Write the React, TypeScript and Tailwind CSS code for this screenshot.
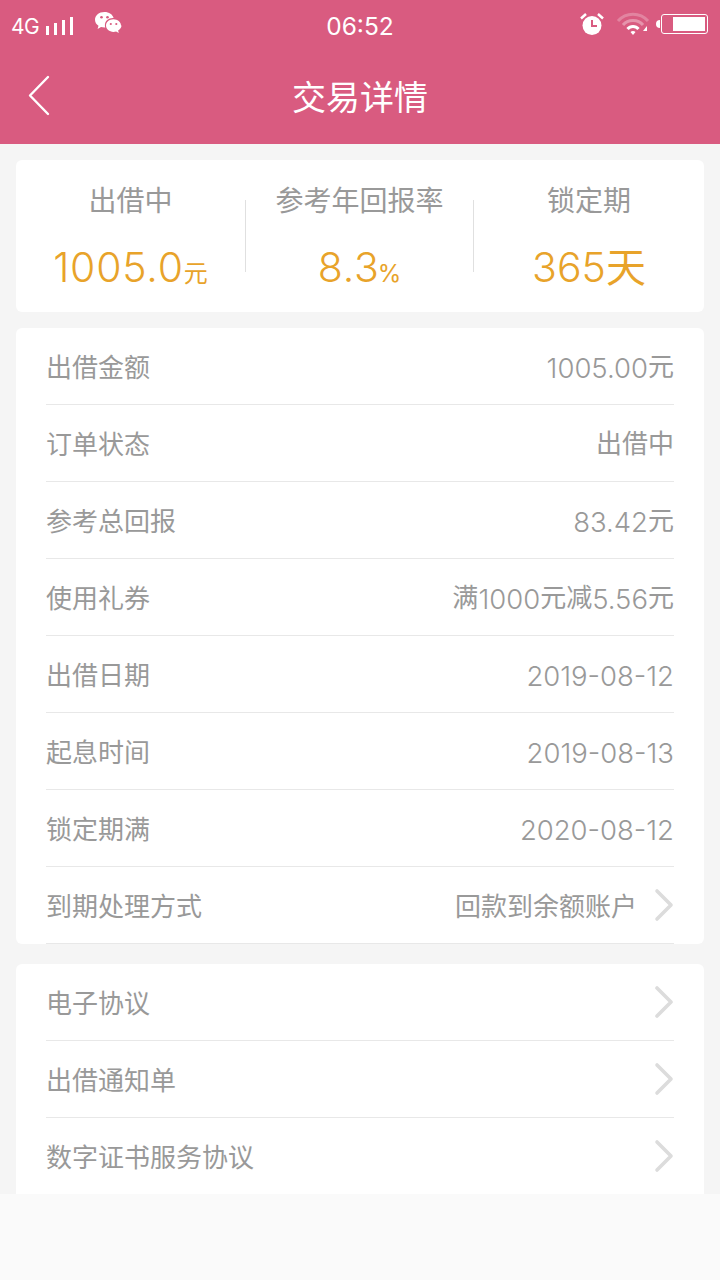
const font = { fontFamily: '"Inter", "Noto Sans CJK SC", sans-serif' };

const detailRows = [
  { label: '出借金额', value: '1005.00元' },
  { label: '订单状态', value: '出借中' },
  { label: '参考总回报', value: '83.42元' },
  { label: '使用礼券', value: '满1000元减5.56元' },
  { label: '出借日期', value: '2019-08-12' },
  { label: '起息时间', value: '2019-08-13' },
  { label: '锁定期满', value: '2020-08-12' },
];

const linkRows = ['电子协议', '出借通知单', '数字证书服务协议'];

function Chevron() {
  return (
    <svg width="20" height="34" viewBox="0 0 20 34" fill="none" className="shrink-0 -mt-[2px]">
      <path d="M3 3 L17 17 L3 31" stroke="#dcdcdc" strokeWidth="3.6" strokeLinecap="round" strokeLinejoin="round" />
    </svg>
  );
}

// digits sit a touch larger than the CJK text around them
function Value({ text }: { text: string }) {
  return (
    <span className="text-[26px] leading-[36px] text-[#999] whitespace-nowrap">
      {text.split(/([0-9.\-]+)/).map((part, i) =>
        i % 2 === 1 ? (
          <span key={i} className="text-[27.5px] leading-none font-light align-[-2px]">{part}</span>
        ) : (
          part
        ),
      )}
    </span>
  );
}

function StatusBar() {
  return (
    <div className="h-12 flex items-center justify-between text-white relative">
      <div className="flex items-center pl-[11px] pt-[5px]">
        <span className="text-[21px] font-normal leading-none tracking-[-0.5px]">4G</span>
        <svg width="30" height="20" viewBox="0 0 30 20" className="ml-[6px]" fill="#fff">
          <rect x="1" y="9" width="3" height="9" />
          <rect x="9" y="6" width="3" height="12" />
          <rect x="17" y="3" width="3" height="15" />
          <rect x="25" y="0" width="3" height="18" />
        </svg>
        <svg width="28" height="26" viewBox="0 0 28 26" className="ml-[19px] -mt-[5px]" fill="#fff">
          <path d="M10.500 1C4.900 1 1 4.500 1 8.800c0 2.500 1.300 4.500 3.500 6L3.600 17.900l3.400-1.800c1.100.3 2.300.5 3.500.5h.8c-.3-.8-.4-1.600-.4-2.400 0-4 3.500-7.100 8-7.100h.7C18.800 3.500 15 1 10.500 1z" />
          <path d="M27 14.600c0-3.500-3.500-6.300-7.500-6.300-4.200 0-7.500 2.800-7.500 6.300s3.300 6.300 7.500 6.300c.9 0 1.800-.1 2.600-.4l2.700 1.500-.7-2.500c2-1.200 3.400-2.800 3.400-4.900z" />
          <circle cx="7.500" cy="6.200" r="1.300" fill="#d95b80" />
          <circle cx="13.500" cy="6.200" r="1.300" fill="#d95b80" />
          <circle cx="16.800" cy="13" r="1.100" fill="#d95b80" />
          <circle cx="22.300" cy="13" r="1.100" fill="#d95b80" />
        </svg>
      </div>
      <span className="absolute left-0 right-0 top-[14px] text-center text-[24.5px] leading-[25px] font-normal">06:52</span>
      <div className="flex items-center pr-3">
        <svg width="26" height="26" viewBox="0 0 26 26" fill="none">
          <circle cx="13" cy="14.500" r="9.500" fill="#fff" />
          <path d="M13 9v6h5" stroke="#d95b80" strokeWidth="2" />
          <path d="M2 7.500 L7 3 M24 7.500 L19 3" stroke="#fff" strokeWidth="2.500" />
        </svg>
        <svg width="34" height="26" viewBox="0 0 34 26" className="ml-[11px]" fill="none">
          <path d="M2 10 C10 1 24 1 32 10" stroke="#fff" strokeOpacity="0.25" strokeWidth="3" />
          <path d="M7 14 C12 8 22 8 27 14" stroke="#fff" strokeOpacity="0.35" strokeWidth="3" />
          <path d="M11.500 18 C14.500 14.500 19.500 14.500 22.500 18" stroke="#fff" strokeWidth="3" />
          <path d="M14.500 21 C16 19.500 18 19.500 19.500 21 L17 24z" fill="#fff" />
          <path d="M27 20 L31 20 L31 15z" fill="#fff" />
        </svg>
        <div className="ml-[6px] w-1 h-2 rounded-l-sm bg-white" />
        <div className="ml-px w-[47px] h-[20px] border border-white rounded-[3px] p-[2px] flex justify-end">
          <div className="w-[32px] h-full bg-white" />
        </div>
      </div>
    </div>
  );
}

function Stat({ label, value, valueClass, unit, unitClass }: { label: string; value: string; valueClass: string; unit: string; unitClass: string }) {
  return (
    <div className="flex flex-col items-center">
      <div className="text-[28px] leading-[40px] text-[#999] font-normal">{label}</div>
      <div className="mt-[19px] leading-[54px] text-[#e8a32a] whitespace-nowrap">
        <span className={valueClass}>{value}</span>
        <span className={unitClass}>{unit}</span>
      </div>
    </div>
  );
}

function Row({ label, children, last }: { label: string; children?: React.ReactNode; last?: boolean }) {
  return (
    <div className={`h-[77px] pt-[2px] flex items-center justify-between border-b ${last ? 'border-transparent' : 'border-[#e8e8e8]'}`}>
      <span className="text-[26px] text-[#999] font-normal">{label}</span>
      {children}
    </div>
  );
}

export default function App() {
  return (
    <div className="w-[720px] h-[1280px] bg-[#f5f5f5] flex flex-col overflow-hidden font-normal" style={font}>
      <div className="bg-[#d95b80]">
        <StatusBar />
        <div className="h-24 flex items-center relative">
          <svg width="24" height="42" viewBox="0 0 24 42" className="ml-[27px] -mt-[1px]" fill="none">
            <path d="M21 2 L3 20.500 L21 39" stroke="#fff" strokeWidth="2.400" strokeLinecap="round" strokeLinejoin="round" />
          </svg>
          <div className="absolute left-0 right-0 top-[2px] text-center text-[34px] leading-[96px] text-white font-normal">交易详情</div>
        </div>
      </div>

      <div className="flex-1 px-4 pt-4 flex flex-col">
        <div className="h-[152px] bg-white rounded-md grid grid-cols-[229px_1px_227px_1px_1fr] items-start pt-[21px]">
          <Stat label="出借中" value="1005.0" valueClass="text-[41px] font-light tracking-[0.8px]" unit="元" unitClass="text-[24px]" />
          <div className="h-[72px] mt-[19px] bg-[#e0e0e0]" />
          <Stat label="参考年回报率" value="8.3" valueClass="text-[41px] font-light tracking-[0.8px]" unit="%" unitClass="text-[24px] -ml-[2px]" />
          <div className="h-[72px] mt-[19px] bg-[#e0e0e0]" />
          <Stat label="锁定期" value="365" valueClass="text-[41px] font-light" unit="天" unitClass="text-[40px]" />
        </div>

        <div className="mt-4 h-[616px] bg-white rounded-md px-[30px]">
          {detailRows.map((row) => (
            <Row key={row.label} label={row.label}>
              <Value text={row.value} />
            </Row>
          ))}
          <Row label="到期处理方式">
            <div className="flex items-center">
              <span className="text-[26px] text-[#999]">回款到余额账户</span>
              <div className="ml-[17px]">
                <Chevron />
              </div>
            </div>
          </Row>
        </div>

        <div className="mt-5 h-[230px] bg-white rounded-t-md px-[30px]">
          {linkRows.map((label, i) => (
            <Row key={label} label={label} last={i === linkRows.length - 1}>
              <Chevron />
            </Row>
          ))}
        </div>
      </div>

      <div className="h-[86px] bg-[#fafafa]" />
    </div>
  );
}
